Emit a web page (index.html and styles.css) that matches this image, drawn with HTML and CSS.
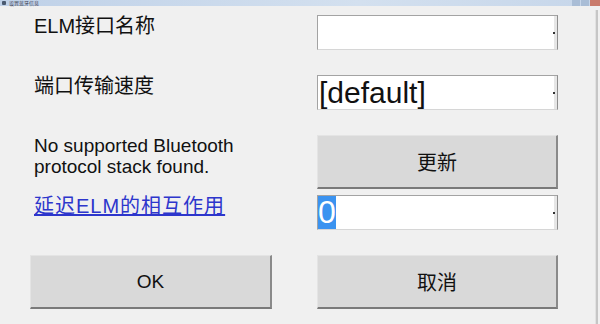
FILE: index.html
```html
<!DOCTYPE html>
<html lang="zh-CN">
<head>
  <meta charset="UTF-8" />
  <title>设置蓝牙信息</title>
  <link rel="stylesheet" href="styles.css">
</head>
<body>
  <div class="titlebar">
    <span class="app-icon"></span>
    <span class="title">设置蓝牙信息</span>
    <span class="win-btns">
      <span class="wb"></span><span class="wb"></span><span class="wb close"></span>
    </span>
  </div>

  <div class="window">
    <main class="form">
      <div class="row">
        <div class="label">ELM接口名称</div>
        <div class="field"></div>
      </div>

      <div class="row">
        <div class="label">端口传输速度</div>
        <div class="field big">[default]</div>
      </div>

      <div class="row row-btn">
        <div class="label note">No supported Bluetooth<br>protocol stack found.</div>
        <button class="btn">更新</button>
      </div>

      <div class="row row-tight">
        <div class="label"><a href="#" class="link">延迟ELM的相互作用</a></div>
        <div class="field num"><span class="sel">0</span></div>
      </div>

      <div class="row row-btn footer">
        <button class="btn ok">OK</button>
        <button class="btn">取消</button>
      </div>
    </main>
    <div class="frame"></div>
  </div>
</body>
</html>
```

FILE: styles.css
```css
* {
  box-sizing: border-box;
}
html, body {
  margin: 0;
  height: 100%;
}
body {
  background: #f0f0f0;
  font-family: "Liberation Sans", "Noto Sans CJK SC", sans-serif;
  color: #111;
  overflow: hidden;
}
.titlebar {
  height: 6px;
  display: flex;
  align-items: center;
  background: linear-gradient(to right, #bfd1e8, #d3e0ef 60%, #c6d6ea);
  padding-left: 2px;
}
.app-icon {
  width: 4px;
  height: 4px;
  background: #4a5a70;
  border-radius: 1px;
}
.title {
  font-size: 5px;
  line-height: 6px;
  color: #445;
  margin-left: 3px;
}
.win-btns {
  margin-left: auto;
  display: flex;
  height: 6px;
}
.wb {
  width: 8px;
  height: 6px;
  background: #a9bdd6;
  margin-left: 1px;
}
.wb.close {
  width: 10px;
  background: #c97b6c;
}
.window {
  display: flex;
  height: 318px;
}
.form {
  width: 595px;
  padding: 9px 0 0 30px;
}
.frame {
  width: 3px;
  background: #c6c6c6;
  border-left: 1px solid #e2e2e2;
  margin-top: 4px;
}
.row {
  display: grid;
  grid-template-columns: 242px 241px;
  column-gap: 45px;
  height: 35px;
  margin-bottom: 25px;
}
.row-btn {
  height: 54px;
  margin-bottom: 6px;
}
.row-tight {
  margin-bottom: 25px;
}
.footer {
  margin-bottom: 0;
}
.label {
  padding-left: 4px;
  font-size: 20px;
  line-height: 22px;
}
.note {
  font-size: 19px;
  line-height: 21px;
}
.link {
  color: #2d36cc;
  text-decoration: underline;
  letter-spacing: 1px;
}
.field {
  position: relative;
  background: #fff;
  border-top: 1px solid #a3a3a3;
  border-left: 1px solid #a3a3a3;
  border-right: 1px solid #8e8e8e;
  border-bottom: 1px solid #d6d6d6;
  box-shadow: inset -3px 0 0 #e6e6e6;
}
.field::after {
  content: "";
  position: absolute;
  right: 2px;
  top: 16px;
  width: 2px;
  height: 2px;
  background: #333;
}
.big {
  font-size: 30px;
  line-height: 33px;
  padding-left: 1px;
}
.num {
  font-size: 32px;
  line-height: 33px;
}
.sel {
  display: inline-block;
  background: #3b93f0;
  color: #fff;
  height: 33px;
  width: 18px;
}
.btn {
  margin: 0;
  padding: 0;
  background: #d9d9d9;
  border-top: 1px solid #e4e4e4;
  border-left: 1px solid #e4e4e4;
  border-right: 2px solid #8a8a8a;
  border-bottom: 2px solid #7a7a7a;
  font-family: "Liberation Sans", "Noto Sans CJK SC", sans-serif;
  font-size: 20px;
  color: #111;
  cursor: pointer;
}
.ok {
  font-size: 19px;
}
```
